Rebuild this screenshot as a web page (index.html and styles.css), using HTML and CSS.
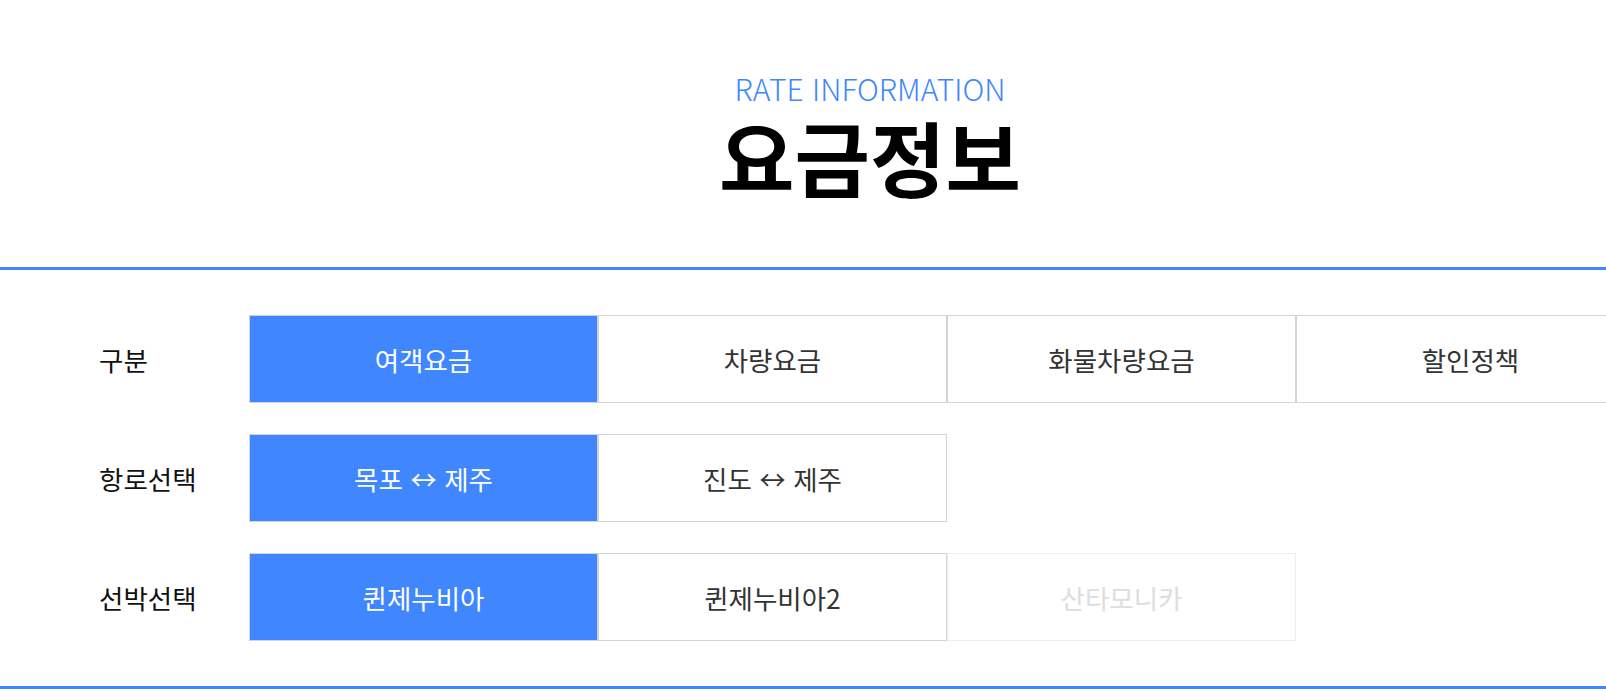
FILE: index.html
```html
<!DOCTYPE html>
<html lang="ko">
<head>
    <meta charset="UTF-8">
    <meta name="viewport" content="width=device-width, initial-scale=1.0">
    <title>요금정보</title>
    <link rel="stylesheet" href="styles.css">
</head>
<body>

    <div id="wrap">
        <div class="head">
            <p class="sub">RATE INFORMATION</p>
            <h2 class="title">요금정보</h2>
        </div>

        <div class="board">
            <div class="row">
                <div class="label">구분</div>
                <div class="tabs">
                    <a class="tab on">여객요금</a>
                    <a class="tab">차량요금</a>
                    <a class="tab">화물차량요금</a>
                    <a class="tab">할인정책</a>
                </div>
            </div>
            <div class="row">
                <div class="label">항로선택</div>
                <div class="tabs">
                    <a class="tab on">목포 ↔ 제주</a>
                    <a class="tab">진도 ↔ 제주</a>
                </div>
            </div>
            <div class="row">
                <div class="label">선박선택</div>
                <div class="tabs">
                    <a class="tab on">퀸제누비아</a>
                    <a class="tab">퀸제누비아2</a>
                    <a class="tab off">산타모니카</a>
                </div>
            </div>
        </div>
    </div>

</body>
</html>
```

FILE: styles.css
```css
html, body {
    margin: 0;
    overflow-x: hidden;
}

body {
    font-family: "Noto Sans CJK KR", "Noto Sans", sans-serif;
    color: #111;
    background: #fff;
}

#wrap {
    width: 1740px;
}

/* 상단 타이틀 */
.head {
    box-sizing: border-box;
    height: 267px;
    padding-top: 73px;
    text-align: center;
}

.sub {
    margin: 0;
    font-size: 30px;
    line-height: 30px;
    font-weight: 300;
    color: #4086ff;
}

.title {
    margin: 12px 0 0;
    font-size: 82px;
    line-height: 82px;
    font-weight: 700;
    color: #000;
}

/* 선택 영역 */
.board {
    display: flex;
    flex-direction: column;
    gap: 31px;
    padding: 45px 0 45px 99px;
    border-top: 3px solid #4086ff;
    border-bottom: 3px solid #4086ff;
}

.row {
    display: flex;
    align-items: center;
}

.label {
    width: 150px;
    font-size: 26.5px;
    color: #111;
}

.tabs {
    display: flex;
}

.tab {
    box-sizing: border-box;
    display: flex;
    align-items: center;
    justify-content: center;
    width: 349px;
    height: 88px;
    border: 1px solid #d4d4d4;
    font-size: 26.5px;
    color: #333;
    cursor: pointer;
}

.tab.on {
    background: #4086ff;
    color: #fff;
}

.tab.off {
    border-color: #ededed;
    color: #ddd;
}
```
